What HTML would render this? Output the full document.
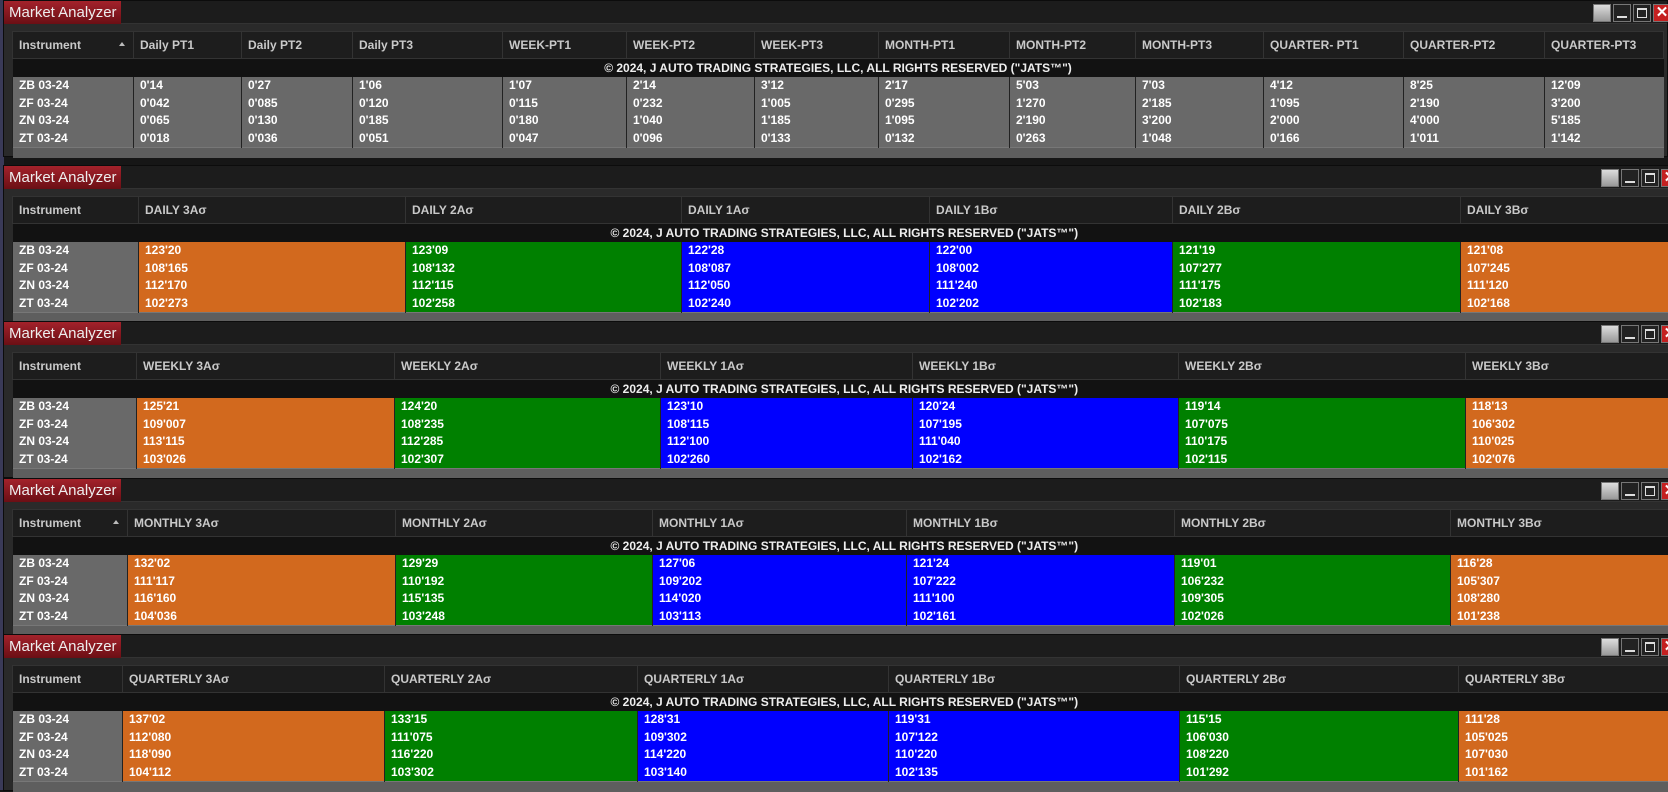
<!DOCTYPE html>
<html><head><meta charset="utf-8"><style>
*{margin:0;padding:0;box-sizing:border-box}
body{width:1668px;height:790px;overflow:hidden;background:#161616;font-family:"Liberation Sans",Arial,sans-serif;position:relative}
.edge{position:absolute;left:0;top:0;width:4px;height:790px;background:#3a3a58}
.p{position:absolute;left:3px;width:1700px;height:157px;background:#2a2a2a;border:1px solid #0c0c0c}
.bar{position:absolute;left:0;top:0;width:100%;height:23px;background:#1c1c1c;border-bottom:1px solid #333}
.tab{position:absolute;left:0;top:0;width:117px;height:23px;background:linear-gradient(#a3222b,#6b0f15);color:#eee;font-size:15px;line-height:23px;padding-left:5px;white-space:nowrap;overflow:hidden}
.btn{position:absolute;top:3px;width:18px;height:18px;border:1px solid #777}
.b1{background:linear-gradient(#ddd,#999)}
.b2{background:#222}.b2:after{content:"";position:absolute;left:3px;right:3px;bottom:3px;height:2px;background:#ddd}
.b3{background:#222}.b3:after{content:"";position:absolute;left:3px;right:3px;top:3px;bottom:3px;border:1px solid #ddd;border-top-width:2px}
.b4{background:#c42020;color:#fff;font-weight:bold;font-size:15px;line-height:16px;text-align:center}
table{position:absolute;left:8px;top:30px;border-collapse:collapse;table-layout:fixed;font-size:12px;font-weight:bold}
th{height:27px;background:#1d1d1d;color:#c9c9c9;text-align:left;padding-left:6px;border:1px solid #333;white-space:nowrap;overflow:hidden;font-weight:bold;position:relative}
td{padding-left:6px;color:#fff;white-space:nowrap;overflow:hidden;border-left:1px solid #222;background:#696969;line-height:17.5px;height:17.5px}
tr.c td{background:#121212;text-align:center;height:18px;line-height:18px;padding:0;color:#eee;border:none}
td.o{background:#d2691e}td.g{background:#008000}td.u{background:#0000ff}
tr.f td{height:10px;line-height:10px;background:#5e5e5e;border:none;border-top:1px solid #777}
.ar{position:absolute;right:8px;top:10px;width:0;height:0;border-left:3px solid transparent;border-right:3px solid transparent;border-bottom:4px solid #bbb}
</style></head><body>
<div class="edge"></div>

<div class="p" style="top:0;width:1665px">
<div class="bar"></div><div class="tab">Market Analyzer</div>
<div class="btn b1" style="left:1589px"></div><div class="btn b2" style="left:1609px"></div><div class="btn b3" style="left:1629px"></div><div class="btn b4" style="left:1649px">✕</div>
<table style="width:1651px">
<colgroup><col style="width:121px"><col style="width:108px"><col style="width:111px"><col style="width:150px"><col style="width:124px"><col style="width:128px"><col style="width:124px"><col style="width:131px"><col style="width:126px"><col style="width:128px"><col style="width:140px"><col style="width:141px"><col style="width:119px"></colgroup>
<tr><th>Instrument<span class="ar"></span></th><th>Daily PT1</th><th>Daily PT2</th><th>Daily PT3</th><th>WEEK-PT1</th><th>WEEK-PT2</th><th>WEEK-PT3</th><th>MONTH-PT1</th><th>MONTH-PT2</th><th>MONTH-PT3</th><th>QUARTER- PT1</th><th>QUARTER-PT2</th><th>QUARTER-PT3</th></tr>
<tr class="c"><td colspan="13">© 2024, J AUTO TRADING STRATEGIES, LLC, ALL RIGHTS RESERVED ("JATS™")</td></tr>
<tr><td>ZB 03-24</td><td>0'14</td><td>0'27</td><td>1'06</td><td>1'07</td><td>2'14</td><td>3'12</td><td>2'17</td><td>5'03</td><td>7'03</td><td>4'12</td><td>8'25</td><td>12'09</td></tr>
<tr><td>ZF 03-24</td><td>0'042</td><td>0'085</td><td>0'120</td><td>0'115</td><td>0'232</td><td>1'005</td><td>0'295</td><td>1'270</td><td>2'185</td><td>1'095</td><td>2'190</td><td>3'200</td></tr>
<tr><td>ZN 03-24</td><td>0'065</td><td>0'130</td><td>0'185</td><td>0'180</td><td>1'040</td><td>1'185</td><td>1'095</td><td>2'190</td><td>3'200</td><td>2'000</td><td>4'000</td><td>5'185</td></tr>
<tr><td>ZT 03-24</td><td>0'018</td><td>0'036</td><td>0'051</td><td>0'047</td><td>0'096</td><td>0'133</td><td>0'132</td><td>0'263</td><td>1'048</td><td>0'166</td><td>1'011</td><td>1'142</td></tr>
<tr class="f"><td colspan="13"></td></tr>
</table></div>

<div class="p" style="top:165px">
<div class="bar"></div><div class="tab">Market Analyzer</div>
<div class="btn b1" style="left:1597px"></div><div class="btn b2" style="left:1617px"></div><div class="btn b3" style="left:1637px"></div><div class="btn b4" style="left:1657px">✕</div>
<table style="width:1700px">
<colgroup><col style="width:126px"><col style="width:267px"><col style="width:276px"><col style="width:248px"><col style="width:243px"><col style="width:288px"><col style="width:252px"></colgroup>
<tr><th>Instrument</th><th>DAILY 3Aσ</th><th>DAILY 2Aσ</th><th>DAILY 1Aσ</th><th>DAILY 1Bσ</th><th>DAILY 2Bσ</th><th>DAILY 3Bσ</th></tr>
<tr class="c"><td colspan="7" style="text-align:left;padding-left:598px">© 2024, J AUTO TRADING STRATEGIES, LLC, ALL RIGHTS RESERVED ("JATS™")</td></tr>
<tr><td>ZB 03-24</td><td class="o">123'20</td><td class="g">123'09</td><td class="u">122'28</td><td class="u">122'00</td><td class="g">121'19</td><td class="o">121'08</td></tr>
<tr><td>ZF 03-24</td><td class="o">108'165</td><td class="g">108'132</td><td class="u">108'087</td><td class="u">108'002</td><td class="g">107'277</td><td class="o">107'245</td></tr>
<tr><td>ZN 03-24</td><td class="o">112'170</td><td class="g">112'115</td><td class="u">112'050</td><td class="u">111'240</td><td class="g">111'175</td><td class="o">111'120</td></tr>
<tr><td>ZT 03-24</td><td class="o">102'273</td><td class="g">102'258</td><td class="u">102'240</td><td class="u">102'202</td><td class="g">102'183</td><td class="o">102'168</td></tr>
<tr class="f"><td colspan="7"></td></tr>
</table></div>

<div class="p" style="top:321px">
<div class="bar"></div><div class="tab">Market Analyzer</div>
<div class="btn b1" style="left:1597px"></div><div class="btn b2" style="left:1617px"></div><div class="btn b3" style="left:1637px"></div><div class="btn b4" style="left:1657px">✕</div>
<table style="width:1700px">
<colgroup><col style="width:124px"><col style="width:258px"><col style="width:266px"><col style="width:252px"><col style="width:266px"><col style="width:287px"><col style="width:247px"></colgroup>
<tr><th>Instrument</th><th>WEEKLY 3Aσ</th><th>WEEKLY 2Aσ</th><th>WEEKLY 1Aσ</th><th>WEEKLY 1Bσ</th><th>WEEKLY 2Bσ</th><th>WEEKLY 3Bσ</th></tr>
<tr class="c"><td colspan="7" style="text-align:left;padding-left:598px">© 2024, J AUTO TRADING STRATEGIES, LLC, ALL RIGHTS RESERVED ("JATS™")</td></tr>
<tr><td>ZB 03-24</td><td class="o">125'21</td><td class="g">124'20</td><td class="u">123'10</td><td class="u">120'24</td><td class="g">119'14</td><td class="o">118'13</td></tr>
<tr><td>ZF 03-24</td><td class="o">109'007</td><td class="g">108'235</td><td class="u">108'115</td><td class="u">107'195</td><td class="g">107'075</td><td class="o">106'302</td></tr>
<tr><td>ZN 03-24</td><td class="o">113'115</td><td class="g">112'285</td><td class="u">112'100</td><td class="u">111'040</td><td class="g">110'175</td><td class="o">110'025</td></tr>
<tr><td>ZT 03-24</td><td class="o">103'026</td><td class="g">102'307</td><td class="u">102'260</td><td class="u">102'162</td><td class="g">102'115</td><td class="o">102'076</td></tr>
<tr class="f"><td colspan="7"></td></tr>
</table></div>

<div class="p" style="top:478px">
<div class="bar"></div><div class="tab">Market Analyzer</div>
<div class="btn b1" style="left:1597px"></div><div class="btn b2" style="left:1617px"></div><div class="btn b3" style="left:1637px"></div><div class="btn b4" style="left:1657px">✕</div>
<table style="width:1700px">
<colgroup><col style="width:115px"><col style="width:268px"><col style="width:257px"><col style="width:254px"><col style="width:268px"><col style="width:276px"><col style="width:262px"></colgroup>
<tr><th>Instrument<span class="ar"></span></th><th>MONTHLY 3Aσ</th><th>MONTHLY 2Aσ</th><th>MONTHLY 1Aσ</th><th>MONTHLY 1Bσ</th><th>MONTHLY 2Bσ</th><th>MONTHLY 3Bσ</th></tr>
<tr class="c"><td colspan="7" style="text-align:left;padding-left:598px">© 2024, J AUTO TRADING STRATEGIES, LLC, ALL RIGHTS RESERVED ("JATS™")</td></tr>
<tr><td>ZB 03-24</td><td class="o">132'02</td><td class="g">129'29</td><td class="u">127'06</td><td class="u">121'24</td><td class="g">119'01</td><td class="o">116'28</td></tr>
<tr><td>ZF 03-24</td><td class="o">111'117</td><td class="g">110'192</td><td class="u">109'202</td><td class="u">107'222</td><td class="g">106'232</td><td class="o">105'307</td></tr>
<tr><td>ZN 03-24</td><td class="o">116'160</td><td class="g">115'135</td><td class="u">114'020</td><td class="u">111'100</td><td class="g">109'305</td><td class="o">108'280</td></tr>
<tr><td>ZT 03-24</td><td class="o">104'036</td><td class="g">103'248</td><td class="u">103'113</td><td class="u">102'161</td><td class="g">102'026</td><td class="o">101'238</td></tr>
<tr class="f"><td colspan="7"></td></tr>
</table></div>

<div class="p" style="top:634px">
<div class="bar"></div><div class="tab">Market Analyzer</div>
<div class="btn b1" style="left:1597px"></div><div class="btn b2" style="left:1617px"></div><div class="btn b3" style="left:1637px"></div><div class="btn b4" style="left:1657px">✕</div>
<table style="width:1700px">
<colgroup><col style="width:110px"><col style="width:262px"><col style="width:253px"><col style="width:251px"><col style="width:291px"><col style="width:279px"><col style="width:254px"></colgroup>
<tr><th>Instrument</th><th>QUARTERLY 3Aσ</th><th>QUARTERLY 2Aσ</th><th>QUARTERLY 1Aσ</th><th>QUARTERLY 1Bσ</th><th>QUARTERLY 2Bσ</th><th>QUARTERLY 3Bσ</th></tr>
<tr class="c"><td colspan="7" style="text-align:left;padding-left:598px">© 2024, J AUTO TRADING STRATEGIES, LLC, ALL RIGHTS RESERVED ("JATS™")</td></tr>
<tr><td>ZB 03-24</td><td class="o">137'02</td><td class="g">133'15</td><td class="u">128'31</td><td class="u">119'31</td><td class="g">115'15</td><td class="o">111'28</td></tr>
<tr><td>ZF 03-24</td><td class="o">112'080</td><td class="g">111'075</td><td class="u">109'302</td><td class="u">107'122</td><td class="g">106'030</td><td class="o">105'025</td></tr>
<tr><td>ZN 03-24</td><td class="o">118'090</td><td class="g">116'220</td><td class="u">114'220</td><td class="u">110'220</td><td class="g">108'220</td><td class="o">107'030</td></tr>
<tr><td>ZT 03-24</td><td class="o">104'112</td><td class="g">103'302</td><td class="u">103'140</td><td class="u">102'135</td><td class="g">101'292</td><td class="o">101'162</td></tr>
<tr class="f"><td colspan="7"></td></tr>
</table></div>
</body></html>
